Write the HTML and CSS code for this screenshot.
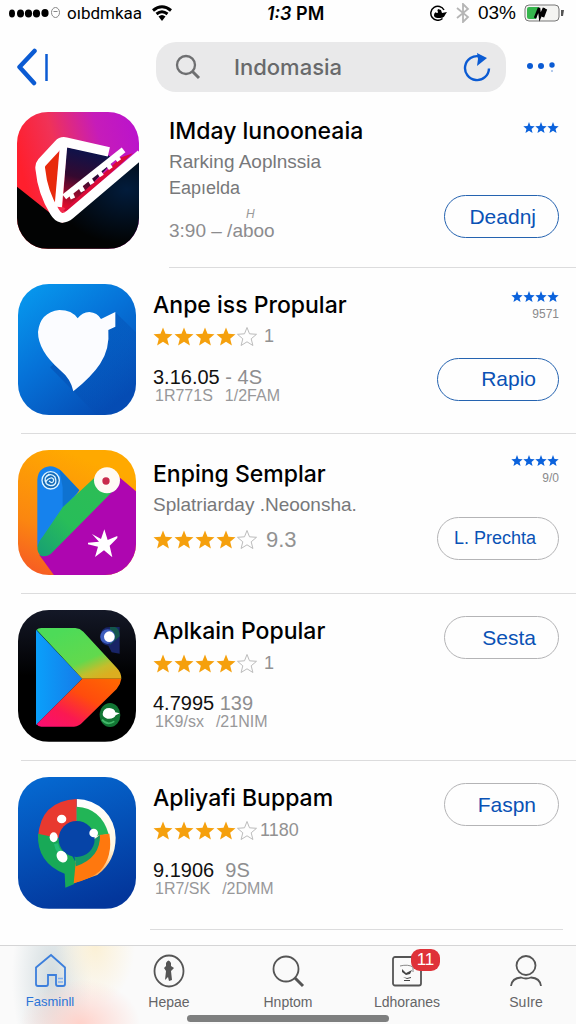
FILE: index.html
```html
<!DOCTYPE html>
<html lang="id">
<head>
<meta charset="utf-8">
<meta name="viewport" content="width=device-width, initial-scale=1">
<title>Indomasia</title>
<link rel="stylesheet" href="styles.css">
</head>
<body>
<svg class="defs" aria-hidden="true">
  <defs>
    <symbol id="star" viewBox="0 0 20 19"><path d="M10 .5l2.500 6.300 7 .500-5.300 4.500 1.700 6.700L10 14.800l-5.900 3.700L5.800 11.800.5 7.300l7-.5z"/></symbol>
  </defs>
</svg>

<header>
  <div class="status">
    <div class="status-left">
      <svg width="52" height="14" viewBox="0 0 52 14" aria-hidden="true"><g fill="#000"><ellipse cx="3" cy="7.500" rx="3" ry="4"/><ellipse cx="11.500" cy="7.500" rx="3.500" ry="4"/><ellipse cx="19.500" cy="7.500" rx="3.600" ry="4"/><ellipse cx="27.500" cy="7.500" rx="3.600" ry="4"/><ellipse cx="36" cy="7" rx="3.600" ry="4"/></g><ellipse cx="46.500" cy="6.500" rx="4" ry="5" fill="none" stroke="#888"/><path d="M44.500 5.500h4" stroke="#888"/></svg>
      <span class="carrier">oıbdmkaa</span>
      <svg width="20" height="16" viewBox="0 0 20 16" aria-hidden="true"><g fill="none" stroke="#000" stroke-width="3"><path d="M1 5.500Q10-2 19 5.500"/><path d="M4.500 9Q10 4.500 15.500 9"/></g><path d="M6.500 11.500Q10 8.500 13.500 11.500L10 16z"/></svg>
    </div>
    <div class="time"><i>1:3</i> PM</div>
    <div class="status-right">
      <svg width="18" height="16" viewBox="0 0 18 16" aria-hidden="true"><path d="M12.500 13.500A7 7 0 1 1 14 5" fill="none" stroke="#000" stroke-width="1.500"/><path d="M4 11c0-3 1-4 3-4l1-3 3 1 1 3 5-1-2 3c-1 3-4 3-6 3s-4 0-5-2z"/><circle cx="7" cy="7" r="1" fill="#fff"/></svg>
      <svg width="14" height="20" viewBox="0 0 14 20" aria-hidden="true"><path d="M1 5l11 9-5 5V1l5 5-11 9" fill="none" stroke="#b5b5b5" stroke-width="1.800"/></svg>
      <span class="percent">03%</span>
      <svg width="42" height="18" viewBox="0 0 42 18" aria-hidden="true"><rect x="1" y="1" width="34" height="16" rx="4" fill="#f4f4f2" stroke="#777"/><path d="M5 3h10L12 15H5a2 2 0 0 1-2-2V5a2 2 0 0 1 2-2z" fill="#35b64d"/><path d="M11 14l4-10 1 9 4-9-1 9 3-8" fill="none" stroke="#000" stroke-width="2.500"/><path d="M37 6h3l-1 6h-2z" fill="#555"/></svg>
    </div>
  </div>
  <div class="toolbar">
    <button class="plain" aria-label="Back"><svg width="34" height="38" viewBox="0 0 34 38"><path d="M19.500 3L4.500 19l14.500 16" fill="none" stroke="#0b5bd3" stroke-width="4.500" stroke-linecap="round" stroke-linejoin="round"/><path d="M31.500 6v27" stroke="#0b5bd3" stroke-width="2.500"/></svg></button>
    <div class="search">
      <svg width="26" height="26" viewBox="0 0 26 26" aria-hidden="true"><circle cx="11" cy="11" r="9" fill="none" stroke="#6e6f71" stroke-width="2.300"/><path d="M17.500 17.500l6.500 6.500" stroke="#6e6f71" stroke-width="3"/></svg>
      <input type="text" value="Indomasia" aria-label="Search">
      <button class="plain" aria-label="Reload"><svg width="28" height="30" viewBox="0 0 28 30"><path d="M17 4.500a12 12 0 1 0 9 12" fill="none" stroke="#0b5bd3" stroke-width="2.400"/><path d="M14 1l10 5-10 8 1-7z" fill="#0b5bd3"/></svg></button>
    </div>
    <button class="plain" aria-label="More"><svg width="30" height="12" viewBox="0 0 30 12"><g fill="#0b5bd3"><circle cx="3" cy="5" r="3"/><circle cx="14" cy="5" r="3"/><circle cx="25" cy="4" r="2.700"/></g><circle cx="25" cy="10" r="1" fill="#9ab9e6"/></svg></button>
  </div>
</header>

<main>
<ul class="apps">
  <li class="app featured">
    <div class="row">
      <svg class="icon" viewBox="54 37 364 408" aria-hidden="true">
        <defs>
          <linearGradient id="a1" x1="0" y1=".3" x2="1" y2="0"><stop offset="0" stop-color="#ff1f2d"/><stop offset=".3" stop-color="#f03258"/><stop offset=".65" stop-color="#c61cb9"/><stop offset="1" stop-color="#b912cf"/></linearGradient>
          <radialGradient id="a2" cx=".9" cy=".35" r=".6"><stop offset="0" stop-color="#021c3c"/><stop offset="1" stop-color="#020303"/></radialGradient>
          <linearGradient id="a3" x1=".5" y1="0" x2=".3" y2="1"><stop offset="0" stop-color="#07144f"/><stop offset=".5" stop-color="#35092f"/><stop offset="1" stop-color="#e20d2c"/></linearGradient>
        </defs>
        <path d="M54 37H418V445H54z" fill="url(#a1)"/>
        <path d="M54 260L190 368 418 172V445H54z" fill="url(#a2)"/>
        <path d="M202 142L325 165 345 180 205 330 190 320z" fill="url(#a3)"/>
        <path d="M180 155L136 198Q140 260 168 310z" fill="#e82a0c"/>
        <path d="M192 332L365 172 400 160 205 335z" fill="#d90b38"/>
        <path d="M328 156L200 127Q187 124 178 134L128 188Q121 196 124 210Q130 275 166 335Q184 366 212 343L424 163" fill="none" stroke="#fff" stroke-width="29" stroke-linejoin="round"/>
        <path d="M193 138L177 320" stroke="#fff" stroke-width="22"/>
        <path d="M195 290L372 150" stroke="#fff" stroke-width="18"/>
        <path d="M214 279l7 16M242 258l9 16M270 236l9 15M297 213l10 15M324 192l10 14M350 170l9 12" stroke="#fff" stroke-width="14"/>
      </svg>
      <div class="info">
        <h2>IMday lunooneaia</h2>
        <p class="subtitle">Rarking Aoplnssia</p>
        <p class="subtitle small">Eapıelda</p>
        <p class="mark">H</p>
        <p class="plan">3:90 – /aboo</p>
      </div>
      <div class="aside">
        <span class="blue-stars"><svg><use href="#star"/></svg><svg><use href="#star"/></svg><svg><use href="#star"/></svg></span>
        <button class="get blue">Deadnj</button>
      </div>
    </div>
  </li>
  <li class="app">
    <div class="row">
      <svg class="icon" viewBox="54 40 354 393" aria-hidden="true">
        <defs>
          <linearGradient id="b1" x1="0" y1="0" x2=".7" y2="1"><stop offset="0" stop-color="#079cf0"/><stop offset=".5" stop-color="#0672d8"/><stop offset="1" stop-color="#054cb4"/></linearGradient>
          <linearGradient id="b2" x1="0" y1="0" x2="1" y2="1"><stop offset="0" stop-color="#043f9f" stop-opacity=".6"/><stop offset="1" stop-color="#044cb0" stop-opacity="0"/></linearGradient>
        </defs>
        <path d="M54 40H408V433H54z" fill="url(#b1)"/>
        <path d="M346 125L408 185V433H290L150 290z" fill="url(#b2)"/>
        <path d="M220 362Q213 325 180 298Q114 240 114 184Q120 125 178 118Q216 118 233 143Q246 125 268 124Q292 126 303 145L346 124V168L325 178Q330 235 300 280Q275 318 220 362z" fill="#fbfcff"/>
      </svg>
      <div class="info">
        <h2>Anpe iss Propular</h2>
        <div class="rating"><svg><use href="#star"/></svg><svg><use href="#star"/></svg><svg><use href="#star"/></svg><svg><use href="#star"/></svg><svg class="empty"><use href="#star"/></svg><span>1</span></div>
        <p class="version"><b>3.16.05</b> - 4S</p>
        <p class="meta"><span>1R771S</span><span>1/2FAM</span></p>
      </div>
      <div class="aside">
        <span class="blue-stars"><svg><use href="#star"/></svg><svg><use href="#star"/></svg><svg><use href="#star"/></svg><svg><use href="#star"/></svg></span>
        <span class="count">9571</span>
        <button class="get blue wide">Rapio</button>
      </div>
    </div>
  </li>
  <li class="app described">
    <div class="row">
      <svg class="icon" viewBox="54 28 354 377" aria-hidden="true">
        <defs>
          <linearGradient id="c1" x1=".4" y1="0" x2="0" y2="1"><stop offset="0" stop-color="#ffa900"/><stop offset=".6" stop-color="#fb8610"/><stop offset="1" stop-color="#f65427"/></linearGradient>
          <linearGradient id="c2" x1="1" y1="0" x2="0" y2="1"><stop offset="0" stop-color="#2dbd55"/><stop offset=".6" stop-color="#28bd59"/><stop offset="1" stop-color="#179e75"/></linearGradient>
        </defs>
        <path d="M54 28H408V405H54z" fill="url(#c1)"/>
        <path d="M358 110L408 152V405H163L118 343z" fill="#ae06b0"/>
        <path d="M112 320V118Q114 80 150 77Q168 77 184 91L238 149 190 220z" fill="#1682ed"/>
        <path d="M178 86L238 149 188 203V140z" fill="#0c6bc5" opacity=".7"/>
        <path d="M112 322Q115 302 128 288L188 200 290 105 350 140 152 340Q138 350 122 345Q112 336 112 322z" fill="url(#c2)"/>
        <circle cx="321" cy="119" r="39" fill="#fffaf4"/><circle cx="318" cy="121" r="11" fill="#c92c4b"/>
        <circle cx="152" cy="119" r="26" fill="#136bb9" stroke="#dff4ff" stroke-width="4"/>
        <path d="M137 110q15-16 28-1 9 25-13 26-24-7-8-19 14-10 17 2-2 14-14 3M148 100q-20 10-9 28" fill="none" stroke="#dff4ff" stroke-width="4"/>
        <path d="M313 266L323 298 352 286 352 292 329 315 337 350 312 329 285 349 294 318 264 311 264 306 297 303 276 280 303 295z" fill="#fff"/>
      </svg>
      <div class="info">
        <h2>Enping Semplar</h2>
        <p class="subtitle">Splatriarday .Neoonsha.</p>
        <div class="rating"><svg><use href="#star"/></svg><svg><use href="#star"/></svg><svg><use href="#star"/></svg><svg><use href="#star"/></svg><svg class="empty"><use href="#star"/></svg><span class="score">9.3</span></div>
      </div>
      <div class="aside">
        <span class="blue-stars"><svg><use href="#star"/></svg><svg><use href="#star"/></svg><svg><use href="#star"/></svg><svg><use href="#star"/></svg></span>
        <span class="count">9/0</span>
        <button class="get wide long-label">L. Prechta</button>
      </div>
    </div>
  </li>
  <li class="app">
    <div class="row">
      <svg class="icon" viewBox="54 33 354 395" aria-hidden="true">
        <defs>
          <linearGradient id="d0" x1="0" y1="0" x2="0" y2="1"><stop offset="0" stop-color="#141827"/><stop offset=".5" stop-color="#000"/></linearGradient>
          <linearGradient id="d1" gradientUnits="userSpaceOnUse" x1="200" y1="90" x2="270" y2="250"><stop offset="0" stop-color="#4ddb58"/><stop offset=".62" stop-color="#62d94d"/><stop offset=".85" stop-color="#c5bd2b"/><stop offset="1" stop-color="#dcae20"/></linearGradient>
          <linearGradient id="d2" x1="0" y1="1" x2="1" y2="0"><stop offset="0" stop-color="#fb0c75"/><stop offset=".3" stop-color="#fa1951"/><stop offset=".6" stop-color="#ff4c0d"/><stop offset="1" stop-color="#ff6a00"/></linearGradient>
          <linearGradient id="d3" x1="0" y1="0" x2="1" y2="0"><stop offset="0" stop-color="#0aa0fb"/><stop offset="1" stop-color="#167ae8"/></linearGradient>
        </defs>
        <path d="M54 33H408V428H54z" fill="url(#d0)"/>
        <path d="M108 92L247 239 108 378z" fill="url(#d3)"/>
        <path d="M110 92Q114 87 124 87H226Q240 88 250 98L350 206Q364 220 364 239H247z" fill="url(#d1)"/>
        <path d="M110 376Q114 383 124 383H222Q238 382 248 370L350 270Q362 255 364 239H247z" fill="url(#d2)"/>
        <path d="M300 113Q302 84 330 84H359V164L335 160 325 140Q302 136 300 113z" fill="#182466"/>
        <path d="M330 84H345Q359 88 359 112L330 138z" fill="#13564d"/>
        <circle cx="323" cy="113" r="22" fill="#3d5dbd"/><circle cx="328" cy="113" r="16" fill="#fff"/>
        <ellipse cx="330" cy="348" rx="31" ry="36" fill="#127634"/><path d="M308 345q2-18 20-18 16 1 18 13l13 3-12 6q-5 12-25 10-14-5-14-14z" fill="#fff"/><path d="M306 362q16 19 37 5" fill="none" stroke="#41b769" stroke-width="5"/>
      </svg>
      <div class="info">
        <h2>Aplkain Popular</h2>
        <div class="rating"><svg><use href="#star"/></svg><svg><use href="#star"/></svg><svg><use href="#star"/></svg><svg><use href="#star"/></svg><svg class="empty"><use href="#star"/></svg><span>1</span></div>
        <p class="version"><b>4.7995</b> 139</p>
        <p class="meta"><span>1K9/sx</span><span>/21NIM</span></p>
      </div>
      <div class="aside">
        <button class="get">Sesta</button>
      </div>
    </div>
  </li>
  <li class="app last">
    <div class="row">
      <svg class="icon" viewBox="54 538 354 395" aria-hidden="true">
        <defs>
          <linearGradient id="e1" x1=".3" y1="0" x2=".6" y2="1"><stop offset="0" stop-color="#0567cf"/><stop offset="1" stop-color="#03369b"/></linearGradient>
          <linearGradient id="e2" x1="0" y1="0" x2="0" y2="1"><stop offset="0" stop-color="#fff"/><stop offset=".6" stop-color="#fff7e0"/><stop offset="1" stop-color="#ff8a18"/></linearGradient>
        </defs>
        <path d="M54 538H408V933H54z" fill="url(#e1)"/>
        <path d="M230 604A117 117 0 0 1 347 720Q347 790 292 832L221 857 230 720z" fill="url(#e2)"/>
        <path d="M230 604V720H114Q120 610 230 604z" fill="#e8392f"/>
        <path d="M114 708L190 725 230 800 223 859 196 870 194 828Q110 795 114 708z" fill="#18a957"/>
        <path d="M230 627Q305 632 326 710L230 722z" fill="#22b556"/>
        <path d="M298 712L328 708Q340 775 300 820Q275 842 221 857L227 795z" fill="#ff780e"/>
        <path d="M300 712Q302 780 228 806L222 770z" fill="#159967"/>
        <circle cx="230" cy="724" r="54" fill="#0644a7"/>
        <path d="M168 738q4 26 28 34" stroke="#23bd76" stroke-width="12" fill="none"/>
        <g fill="#fff"><ellipse cx="185" cy="664" rx="14" ry="13"/><ellipse cx="161" cy="719" rx="12" ry="15"/><ellipse cx="186" cy="777" rx="15" ry="19" transform="rotate(-35 186 777)"/><circle cx="281" cy="706" r="13"/></g>
      </svg>
      <div class="info">
        <h2>Apliyafi Buppam</h2>
        <div class="rating"><svg><use href="#star"/></svg><svg><use href="#star"/></svg><svg><use href="#star"/></svg><svg><use href="#star"/></svg><svg class="empty"><use href="#star"/></svg><span class="long">1180</span></div>
        <p class="version"><b>9.1906</b> &nbsp;9S</p>
        <p class="meta"><span>1R7/SK</span><span>/2DMM</span></p>
      </div>
      <div class="aside">
        <button class="get">Faspn</button>
      </div>
    </div>
  </li>
</ul>
</main>

<nav class="tabbar">
  <div class="tabs">
    <a class="tab active" href="#"><svg viewBox="0 0 36 36" aria-hidden="true"><path d="M4 14.500L19 2l14 12.500V31q0 2-2 2h-5q-2 0-2-2V22h-8v9q0 2-2 2H6q-2 0-2-2z" fill="none" stroke="#3c7fdc" stroke-width="1.800"/><path d="M26 25.500h5M26 29h5" stroke="#87b1eb" stroke-width="1.500"/></svg>Fasminll</a>
    <a class="tab" href="#"><svg viewBox="0 0 36 36" aria-hidden="true"><ellipse cx="18" cy="18" rx="14.500" ry="15.500" fill="none" stroke="#555" stroke-width="1.800"/><path d="M15 10q2.500-5 5 0v3l3 2-3 3 1 9-3 1-1-4-3 3 1-9-2-3 2-2z" fill="#555"/></svg>Hepae</a>
    <a class="tab" href="#"><svg viewBox="0 0 36 36" aria-hidden="true"><circle cx="16" cy="16" r="12.500" fill="none" stroke="#555" stroke-width="1.800"/><path d="M25 25l8 8" stroke="#555" stroke-width="3"/></svg>Hnptom</a>
    <a class="tab" href="#"><svg viewBox="0 0 36 36" aria-hidden="true"><rect x="4" y="4" width="28" height="28.500" rx="2" fill="none" stroke="#555" stroke-width="1.800"/><path d="M11 13q8-2 13 1v5" fill="none" stroke="#888"/><path d="M13 16l4 4 6-3-2 4-4 1-4-3zM14 24l4 1 4-1v1l-4 1zM15 27h6v1h-6z" fill="#444"/></svg>Ldhoranes<span class="badge">11</span></a>
    <a class="tab" href="#"><svg viewBox="0 0 36 36" aria-hidden="true"><circle cx="18" cy="12.500" r="9.500" fill="none" stroke="#555" stroke-width="1.800"/><path d="M3 33q1-8 10-8.500 5 2 10 0 9 .500 10 8.500" fill="none" stroke="#555" stroke-width="1.800"/></svg>SuIre</a>
  </div>
  <div class="home-indicator"></div>
</nav>
</body>
</html>
```
FILE: styles.css
```css
* { box-sizing: border-box; }

body {
  margin: 0;
  min-height: 100vh;
  display: flex;
  flex-direction: column;
  background: #fefefe;
  color: #000;
  font-family: "Liberation Sans", Arial, sans-serif;
}

h2, p, ul { margin: 0; padding: 0; }
button, input { font: inherit; }
svg { display: block; flex: none; }
.defs { position: absolute; width: 0; height: 0; }

/* Status bar */
.status {
  display: grid;
  grid-template-columns: 1fr auto 1fr;
  align-items: center;
  height: 26px;
  padding: 0 10px 0 9px;
}
.status-left, .status-right { display: flex; align-items: center; }
.status-left { gap: 6px; }
.status-right { justify-content: flex-end; gap: 8px; }
.carrier { font-family: Roboto, sans-serif; font-size: 17px; margin-right: 4px; }
.time { padding-left: 16px; font-family: Inter, sans-serif; font-size: 18px; font-weight: 600; }
.percent { font-size: 19px; }

/* Toolbar */
.toolbar {
  display: flex;
  align-items: center;
  padding: 16px 19px 8px 15px;
}
.plain { display: block; padding: 0; border: 0; background: none; }
.search {
  flex: 1;
  display: flex;
  align-items: center;
  min-width: 0;
  height: 50px;
  margin: 0 21px 0 107px;
  padding: 0 15px 0 19px;
  border-radius: 20px;
  background: #e9e9ea;
}
.search input {
  flex: 1;
  min-width: 0;
  padding: 0;
  margin-left: 33px;
  border: 0;
  background: none;
  color: #68696b;
  font-family: Inter, sans-serif;
  font-size: 22px;
  font-weight: 500;
}

/* App list */
.apps { list-style: none; }
.app::after {
  content: "";
  display: block;
  height: 1px;
  margin-left: 21px;
  background: #dcdcdd;
}
.row {
  display: flex;
  align-items: flex-start;
  gap: 17px;
  padding: 16px 17px 18px 18px;
}
.icon { width: 118px; border-radius: 31px; }
.info { flex: 1; min-width: 0; padding-top: 6px; }
h2 {
  font-family: Inter, sans-serif;
  font-size: 23px;
  line-height: 30px;
  font-weight: 500;
  white-space: nowrap;
}
.subtitle {
  margin-top: 3px;
  color: #77787a;
  font-size: 19px;
  line-height: 26px;
  white-space: nowrap;
}
.rating {
  display: flex;
  align-items: center;
  gap: 1px;
  height: 20px;
  margin-top: 7px;
  color: #929292;
  font-size: 18px;
}
.rating svg { width: 20px; height: 19px; fill: #f5a00d; }
.rating .empty { fill: none; stroke: #bbb; stroke-width: 1px; }
.rating span { margin-left: 6px; }
.rating .score { margin-left: 8px; font-size: 22px; }
.rating .long { margin-left: 2px; }
.version {
  margin-top: 18px;
  color: #8e8e90;
  font-size: 20px;
  line-height: 24px;
}
.version b { color: #111; font-weight: 400; }
.meta {
  display: flex;
  gap: 12px;
  padding-left: 2px;
  color: #98989a;
  font-size: 16px;
  line-height: 14px;
}

.aside { display: flex; flex-direction: column; align-items: flex-end; padding-top: 6px; }
.blue-stars { display: flex; }
.blue-stars svg { width: 12px; height: 13px; fill: #0b62dc; }
.count { margin-top: 4px; color: #8a8a8c; font-size: 12px; line-height: 14px; }
.get {
  min-width: 115px;
  height: 43px;
  padding: 0 22px;
  border: 1px solid #b4b4b6;
  border-radius: 22px;
  background: #fefefe;
  color: #0a52b5;
  font-size: 21px;
  text-align: right;
}
.get.blue { border-color: #2563b0; }
.get.wide { min-width: 122px; padding-left: 16px; }
.get.long-label { font-size: 18px; }
.count + .get { margin-top: 37px; }

.featured .row { gap: 30px; padding: 12px 17px 18px; }
.featured .icon { width: 122px; }
.featured .info { padding-top: 4px; }
.featured::after { margin-left: 169px; }
.featured .small { margin: 0; font-size: 18px; }
.featured .aside { padding-top: 9px; }
.featured .get { margin-top: 61px; }
.mark { margin-top: 6px; padding-left: 77px; color: #999; font-size: 12px; line-height: 14px; font-style: italic; }
.plan { color: #8c8c8e; font-size: 19px; line-height: 20px; }
.described .info { padding-top: 9px; }
.described .rating { margin-top: 12px; }
.described .aside { padding-top: 4px; }
.described .count + .get { margin-top: 32px; }
.last::after { margin: 2px 13px 0 150px; }

/* Tab bar */
.tabbar {
  margin-top: auto;
  padding: 7px 8px 2px;
  border-top: 1px solid #d5d5d6;
  background:
    radial-gradient(ellipse 60px 45px at 80px 100%, #ffd2ca, transparent),
    radial-gradient(ellipse 40px 60px at 95px 0, #fbf0d5, transparent),
    radial-gradient(ellipse 40px 100px at 52px 40%, #d2dcdf, transparent),
    #fafafa;
}
.tabs { display: flex; justify-content: space-between; }
.tab {
  position: relative;
  display: flex;
  flex-direction: column;
  align-items: center;
  gap: 5px;
  width: 84px;
  color: #656567;
  font-size: 14px;
  line-height: 16px;
  text-decoration: none;
}
.tab svg { width: 36px; height: 36px; }
.tab.active { color: #2b74d8; font-size: 13px; }
.badge {
  position: absolute;
  top: -4px;
  left: 46px;
  width: 29px;
  border-radius: 9px;
  background: #df3239;
  color: #fff;
  font-size: 17px;
  line-height: 22px;
  text-align: center;
}
.home-indicator {
  width: 36%;
  height: 7px;
  margin: 5px auto 0;
  border-radius: 4px;
  background: #7e7f7f;
}
```
